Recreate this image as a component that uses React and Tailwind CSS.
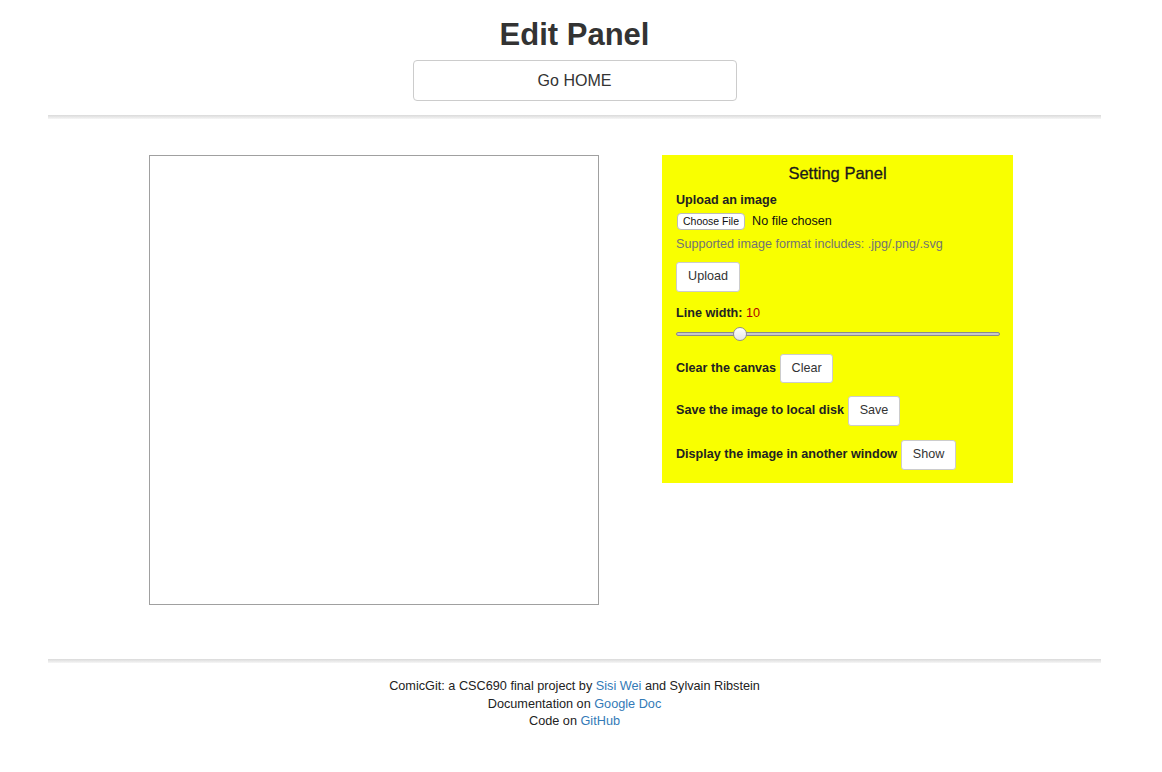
export default function App() {
    return (
        <div className="min-h-[772px] bg-white text-[#333] font-['Liberation_Sans',Arial,sans-serif]">
            <div className="ml-[48px] w-[1053px]">
                {/* Header */}
                <div className="flex flex-col items-center pt-[18px]">
                    <h1 className="text-[31px] font-bold leading-[34px]">Edit Panel</h1>
                    <button className="mt-[8px] h-[41px] w-[324px] rounded-[4px] border border-[#ccc] bg-white text-[16px] text-[#333]">
                        Go HOME
                    </button>
                </div>
                <div className="mt-[14px] h-[4px] bg-gradient-to-b from-[#dadada] to-[#f6f6f6]" />

                {/* Main */}
                <div className="flex items-start gap-[63px] pl-[101px] pt-[36px]">
                    <div className="h-[450px] w-[450px] border border-[#a0a0a0] bg-white" />

                    <div className="w-[351px] bg-[#f9ff00] px-[14px] pb-[13px] pt-[8px] text-[12.6px] text-[#222]">
                        <h3 className="text-center text-[16.5px] leading-[20px] text-[#1a1a1a] [-webkit-text-stroke:0.3px_#1a1a1a]">Setting Panel</h3>

                        <div className="mt-[9px] font-bold leading-[16px]">Upload an image</div>
                        <div className="mt-[4px] flex items-center gap-[7px]">
                            <span className="ml-[1px] flex h-[17px] items-center rounded-[4px] border border-[#bbb] bg-white px-[5px] text-[10.5px] text-[#111]">
                                Choose File
                            </span>
                            <span className="text-[#111]">No file chosen</span>
                        </div>
                        <div className="mt-[5px] leading-[16px] text-[#737373]">
                            Supported image format includes: .jpg/.png/.svg
                        </div>
                        <button className="mt-[10px] h-[30px] w-[64px] rounded-[3px] border border-[#ccc] bg-white text-[12.6px] text-[#333]">
                            Upload
                        </button>

                        <div className="mt-[13px] leading-[16px]">
                            <span className="font-bold">Line width: </span>
                            <span className="text-[#b00000]">10</span>
                        </div>
                        <div className="relative mt-[5px] h-[16px] w-[324px]">
                            <div className="absolute left-0 right-0 top-[6px] h-[4px] rounded-full border border-[#8a8a8a] bg-[#c8c8c8]" />
                            <div className="absolute left-[57px] top-[1px] h-[14px] w-[14px] rounded-full border border-[#8f8f8f] bg-gradient-to-b from-white to-[#e6e6e6]" />
                        </div>

                        <div className="mt-[12px] flex items-center gap-[4px]">
                            <span className="font-bold">Clear the canvas</span>
                            <button className="h-[29px] w-[53px] rounded-[3px] border border-[#ccc] bg-white text-[12.6px] text-[#333]">
                                Clear
                            </button>
                        </div>
                        <div className="mt-[13px] flex items-center gap-[4px]">
                            <span className="font-bold">Save the image to local disk</span>
                            <button className="h-[30px] w-[52px] rounded-[3px] border border-[#ccc] bg-white text-[12.6px] text-[#333]">
                                Save
                            </button>
                        </div>
                        <div className="mt-[14px] flex items-center gap-[4px]">
                            <span className="font-bold">Display the image in another window</span>
                            <button className="h-[30px] w-[55px] rounded-[3px] border border-[#ccc] bg-white text-[12.6px] text-[#333]">
                                Show
                            </button>
                        </div>
                    </div>
                </div>

                {/* Footer */}
                <div className="mt-[54px] h-[4px] bg-gradient-to-b from-[#dadada] to-[#f6f6f6]" />
                <div className="pt-[15px] text-center text-[12.7px] leading-[17.5px] text-[#222]">
                    <div>
                        ComicGit: a CSC690 final project by <a className="text-[#337ab7]">Sisi Wei</a> and Sylvain Ribstein
                    </div>
                    <div>
                        Documentation on <a className="text-[#337ab7]">Google Doc</a>
                    </div>
                    <div>
                        Code on <a className="text-[#337ab7]">GitHub</a>
                    </div>
                </div>
            </div>
        </div>
    );
}
